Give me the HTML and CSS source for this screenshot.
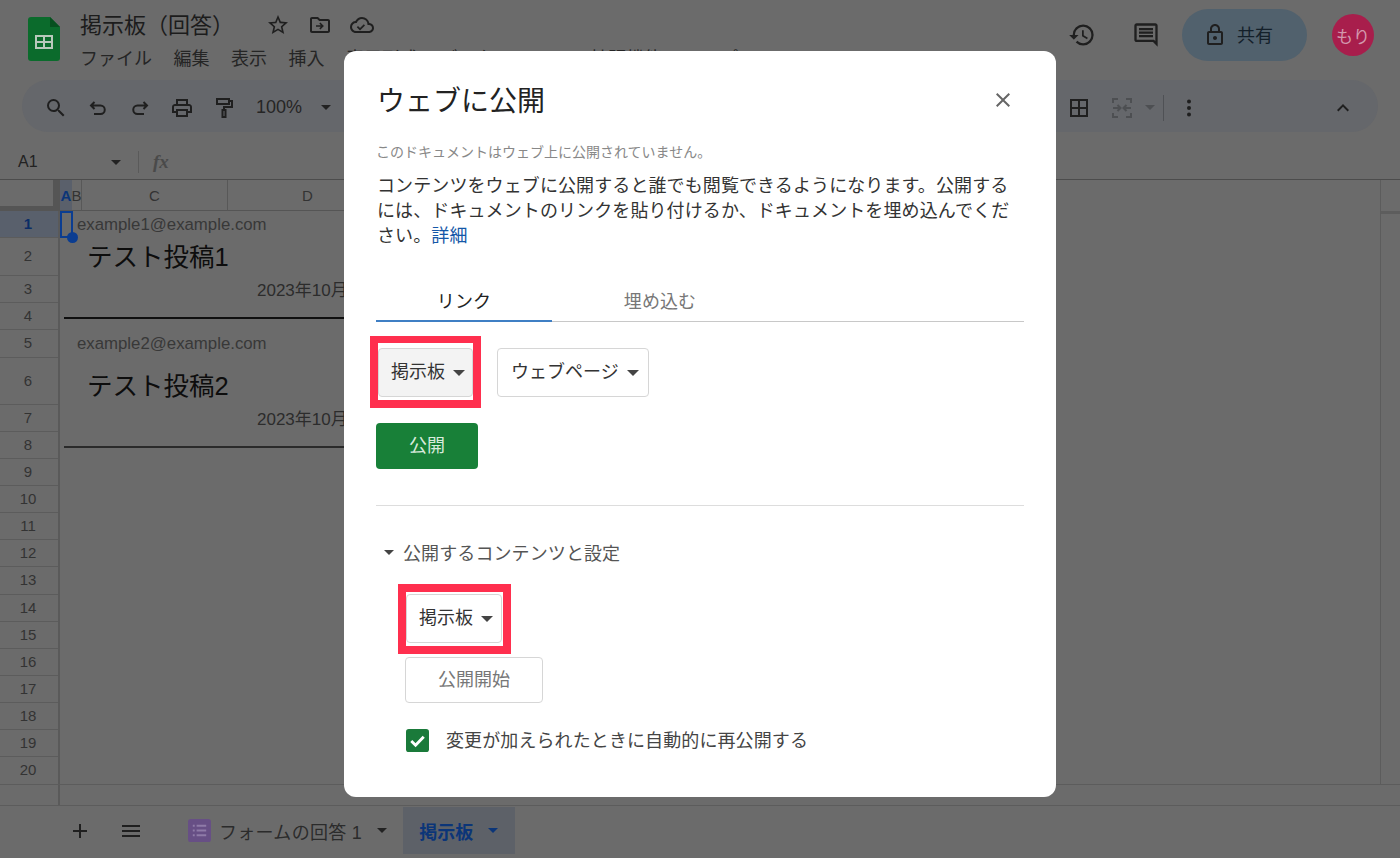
FILE: index.html
```html
<!DOCTYPE html>
<html lang="ja">
<head>
<meta charset="utf-8">
<title>掲示板（回答）</title>
<link rel="stylesheet" href="styles.css">
</head>
<body>
<div class="app">
  <header class="topbar">
    <svg class="logo" viewBox="0 0 32 44"><path class="logo-body" d="M3 0h19l10 10v31a3 3 0 0 1-3 3H3a3 3 0 0 1-3-3V3a3 3 0 0 1 3-3z"/><path class="logo-fold" d="M22 0l10 10H22z"/><path class="logo-grid" d="M7 18h18v14H7zm2 2v4h6v-4zm8 0v4h6v-4zm-8 6v4h6v-4zm8 0v4h6v-4z" fill-rule="evenodd"/></svg>
    <div class="titleblock">
      <div class="titlerow">
        <span class="doctitle">掲示板（回答）</span>
        <svg class="ico star" viewBox="0 0 24 24"><path d="M22 9.24l-7.19-.62L12 2 9.19 8.63 2 9.24l5.46 4.73L5.82 21 12 17.27 18.18 21l-1.63-7.03L22 9.24zM12 15.4l-3.76 2.27 1-4.28-3.32-2.88 4.38-.38L12 6.1l1.71 4.04 4.38.38-3.32 2.88 1 4.28L12 15.4z"/></svg>
        <svg class="ico" viewBox="0 0 24 24"><path d="M20 6h-8l-2-2H4c-1.1 0-2 .9-2 2v12c0 1.1.9 2 2 2h16c1.1 0 2-.9 2-2V8c0-1.1-.9-2-2-2zm0 12H4V6h5.17l2 2H20v10zM12.4 16.5l3.5-3.5-3.5-3.5-1.1 1.1 1.6 1.6H8v1.6h4.9l-1.6 1.6z"/></svg>
        <svg class="ico" viewBox="0 0 24 24"><path d="M19.35 10.04A7.49 7.49 0 0 0 12 4C9.11 4 6.6 5.64 5.35 8.04A5.994 5.994 0 0 0 0 14c0 3.31 2.69 6 6 6h13c2.76 0 5-2.24 5-5 0-2.64-2.05-4.78-4.65-4.96zM19 18H6c-2.21 0-4-1.79-4-4s1.79-4 4-4h.71C7.37 7.69 9.48 6 12 6a5.5 5.5 0 0 1 5.5 5.5v.5H19c1.66 0 3 1.34 3 3s-1.34 3-3 3zM10 15l-2-2-1.2 1.2L10 17.4l5-5-1.2-1.2z"/></svg>
      </div>
      <nav class="menubar">
        <span>ファイル</span><span>編集</span><span>表示</span><span>挿入</span><span>表示形式</span><span>データ</span><span>ツール</span><span>拡張機能</span><span>ヘルプ</span>
      </nav>
    </div>
    <div class="topright">
      <svg class="ico big" viewBox="0 0 24 24"><path d="M13 3a9 9 0 0 0-9 9H1l3.89 3.89.07.14L9 12H6c0-3.87 3.13-7 7-7s7 3.13 7 7-3.13 7-7 7c-1.93 0-3.68-.79-4.94-2.06l-1.42 1.42A8.954 8.954 0 0 0 13 21a9 9 0 0 0 0-18zm-1 5v5l4.28 2.54.72-1.21-3.5-2.08V8H12z"/></svg>
      <svg class="ico big comment" viewBox="0 0 24 24"><path d="M21.99 4c0-1.1-.89-2-1.99-2H4c-1.1 0-2 .9-2 2v12c0 1.1.9 2 2 2h14l4 4-.01-18zM20 4v13.17L18.83 16H4V4h16zM6 12h12v2H6zm0-3h12v2H6zm0-3h12v2H6z"/></svg>
      <div class="share">
        <svg class="ico" viewBox="0 0 24 24"><path d="M18 8h-1V6c0-2.76-2.24-5-5-5S7 3.24 7 6v2H6c-1.1 0-2 .9-2 2v10c0 1.1.9 2 2 2h12c1.1 0 2-.9 2-2V10c0-1.1-.9-2-2-2zM9 6c0-1.66 1.34-3 3-3s3 1.34 3 3v2H9V6zm9 14H6V10h12v10zm-6-3c1.1 0 2-.9 2-2s-.9-2-2-2-2 .9-2 2 .9 2 2 2z"/></svg>
        <span class="sharelabel">共有</span>
      </div>
      <div class="avatar">もり</div>
    </div>
  </header>

  <div class="toolbar">
    <div class="tbgroup">
      <span class="tbbtn"><svg class="ico" viewBox="0 0 24 24"><path d="M15.5 14h-.79l-.28-.27A6.471 6.471 0 0 0 16 9.5 6.5 6.5 0 1 0 9.5 16c1.61 0 3.09-.59 4.23-1.57l.27.28v.79l5 4.99L20.49 19l-4.99-5zm-6 0C7.01 14 5 11.99 5 9.5S7.01 5 9.5 5 14 7.01 14 9.5 11.99 14 9.5 14z"/></svg></span>
      <span class="tbbtn"><svg class="ico line" viewBox="0 0 24 24"><path d="M8.5 6L5 9.5 8.5 13M5 9.5h9.5a4.25 4.25 0 0 1 0 8.500H8"/></svg></span>
      <span class="tbbtn"><svg class="ico line" viewBox="0 0 24 24"><path d="M15.500 6L19 9.5 15.500 13M19 9.5H9.500a4.250 4.250 0 0 0 0 8.500H16"/></svg></span>
      <span class="tbbtn"><svg class="ico" viewBox="0 0 24 24"><path d="M19 8h-1V3H6v5H5c-1.66 0-3 1.34-3 3v6h4v4h12v-4h4v-6c0-1.66-1.34-3-3-3zM8 5h8v3H8V5zm8 14H8v-4h8v4zm4-4h-2v-2H6v2H4v-4c0-.55.45-1 1-1h14c.55 0 1 .45 1 1v4z"/></svg></span>
      <span class="tbbtn"><svg class="ico line" viewBox="0 0 24 24"><path d="M5 3h12v5H5zM17 5h3v6h-8v3M10.5 14h3v7h-3z"/></svg></span>
      <span class="zoomval">100%</span>
      <span class="caret zoomcaret"></span>
    </div>
    <div class="tbgroup">
      <svg class="ico" viewBox="0 0 24 24"><path d="M3 3v18h18V3H3zm8 16H5v-6h6v6zm0-8H5V5h6v6zm8 8h-6v-6h6v6zm0-8h-6V5h6v6z"/></svg>
      <svg class="ico line faded mergeico" viewBox="0 0 24 24"><path d="M8 3H3v4M3 17v4h5M16 3h5v4M21 17v4h-5M3 12h7M7.5 9l3 3-3 3M21 12h-7M16.5 9l-3 3 3 3"/></svg>
      <span class="caret faded-caret"></span>
      <span class="vsep"></span>
      <svg class="ico dots" viewBox="0 0 24 24"><circle cx="12" cy="5.5" r="2"/><circle cx="12" cy="12" r="2"/><circle cx="12" cy="18.5" r="2"/></svg>
      <svg class="ico chevron" viewBox="0 0 24 24"><path d="M7.41 15.41L12 10.83l4.59 4.58L18 14l-6-6-6 6z"/></svg>
    </div>
  </div>

  <div class="formulabar">
    <span class="cellname">A1</span>
    <span class="caret"></span>
    <span class="fsep"></span>
    <span class="fx">fx</span>
  </div>

  <div class="colheads">
    <div class="corner"></div>
    <div class="col col-a">A</div>
    <div class="col col-b">B</div>
    <div class="col col-c">C</div>
    <div class="col col-d">D</div>
    <div class="colspace"></div>
    <div class="scrolltop"></div>
  </div>

  <div class="sheet">
    <div class="rowheads">
      <div class="rh rh-sel h27">1</div>
      <div class="rh h38">2</div>
      <div class="rh h27">3</div>
      <div class="rh h27">4</div>
      <div class="rh h28">5</div>
      <div class="rh h47">6</div>
      <div class="rh h27">7</div>
      <div class="rh h27">8</div>
      <div class="rh h27">9</div>
      <div class="rh h27">10</div>
      <div class="rh h27">11</div>
      <div class="rh h27">12</div>
      <div class="rh h28">13</div>
      <div class="rh h27">14</div>
      <div class="rh h27">15</div>
      <div class="rh h27">16</div>
      <div class="rh h27">17</div>
      <div class="rh h27">18</div>
      <div class="rh h27">19</div>
      <div class="rh h27 last">20</div>
    </div>
    <div class="cells">
      <div class="row h27 email"><span class="selbox"><i class="seldot"></i></span>example1@example.com</div>
      <div class="row h38 posttitle">テスト投稿1</div>
      <div class="row h27 date">2023年10月</div>
      <div class="row h27"><div class="rule"></div></div>
      <div class="row h28 email">example2@example.com</div>
      <div class="row h47 posttitle lower">テスト投稿2</div>
      <div class="row h27 date">2023年10月</div>
      <div class="row h27"><div class="rule soft"></div></div>
    </div>
    <div class="vscroll"></div>
  </div>

  <div class="hscroll"><div class="hscroll-left"></div></div>

  <footer class="tabs">
    <svg class="ico plus" viewBox="0 0 24 24"><path d="M19 13h-6v6h-2v-6H5v-2h6V5h2v6h6v2z"/></svg>
    <svg class="ico menu" viewBox="0 0 24 24"><path d="M3 18h18v-2H3v2zm0-5h18v-2H3v2zm0-7v2h18V6H3z"/></svg>
    <div class="tab">
      <svg class="formico" viewBox="0 0 24 24"><rect width="24" height="24" rx="3"/><path d="M5 6h2v2H5zM9 6h10v2H9zM5 11h2v2H5zM9 11h10v2H9zM5 16h2v2H5zM9 16h10v2H9z"/></svg>
      <span class="tablabel">フォームの回答 1</span>
      <span class="caret"></span>
    </div>
    <div class="tab active">
      <span class="tablabel">掲示板</span>
      <span class="caret"></span>
    </div>
  </footer>
</div>

<section class="dialog">
  <div class="dlghead">
    <h1>ウェブに公開</h1>
    <svg class="closeico" viewBox="0 0 24 24"><path d="M19 6.41L17.59 5 12 10.59 6.41 5 5 6.41 10.59 12 5 17.59 6.41 19 12 13.41 17.59 19 19 17.59 13.41 12z"/></svg>
  </div>
  <p class="status">このドキュメントはウェブ上に公開されていません。</p>
  <p class="desc">コンテンツをウェブに公開すると誰でも閲覧できるようになります。公開するには、ドキュメントのリンクを貼り付けるか、ドキュメントを埋め込んでください。<a href="#">詳細</a></p>
  <div class="dlgtabs">
    <div class="dlgtab on">リンク</div>
    <div class="dlgtab">埋め込む</div>
  </div>
  <div class="selects">
    <div class="select hovered">掲示板<span class="caret"></span><span class="mark mark-a"></span></div>
    <div class="select wide">ウェブページ<span class="caret"></span></div>
  </div>
  <button class="publish">公開</button>
  <hr class="divider">
  <div class="settings-head"><span class="caret"></span>公開するコンテンツと設定</div>
  <div class="settings">
    <div class="select small">掲示板<span class="caret"></span><span class="mark mark-b"></span></div>
    <button class="start">公開開始</button>
    <label class="check">
      <svg class="checkbox" viewBox="0 0 24 24"><rect width="24" height="24" rx="3"/><path d="M5.5 12.5l4.5 4.5 8.5-9" /></svg>
      <span class="checklabel">変更が加えられたときに自動的に再公開する</span>
    </label>
  </div>
</section>
</body>
</html>
```
FILE: styles.css
```css
* { box-sizing: border-box; }
html, body { margin: 0; padding: 0; height: 100%; }
body {
  position: relative;
  width: 1400px;
  height: 858px;
  overflow: hidden;
  background: #6b6b6b;
  color: #1f1f1f;
  font-family: "Liberation Sans", "Noto Sans CJK JP", sans-serif;
}
.app { display: flex; flex-direction: column; height: 858px; }

.ico { width: 24px; height: 24px; fill: #1f1f1f; flex: none; display: block; }
.ico.big { width: 28px; height: 28px; }
.ico.line { fill: none; stroke: #1f1f1f; stroke-width: 2; }
.caret {
  display: inline-block;
  width: 0;
  height: 0;
  border-left: 5px solid transparent;
  border-right: 5px solid transparent;
  border-top: 5px solid #222;
  flex: none;
}

/* top bar */
.topbar { height: 80px; display: flex; align-items: flex-start; flex: none; padding-left: 28px; }
.logo { width: 32px; height: 44px; margin-top: 17px; flex: none; }
.logo-body { fill: #0b6b2c; }
.logo-fold { fill: #07501f; }
.logo-grid { fill: #b9c9bc; }
.titleblock { margin-left: 20px; padding-top: 10px; }
.titlerow { display: flex; align-items: center; height: 30px; }
.doctitle { font-size: 22px; width: 154px; color: #1c1c1c; white-space: nowrap; margin-bottom: 5px; }
.titlerow .ico { margin-right: 18px; }
.titlerow .star { margin-left: 32px; }
.menubar { display: flex; gap: 21.5px; font-size: 18px; line-height: 24px; margin-top: 7px; color: #252525; white-space: nowrap; }
.topright { margin-left: auto; display: flex; align-items: center; height: 70px; padding-right: 26px; }
.comment { margin-left: 36px; }
.share {
  margin-left: 22px;
  width: 125px;
  height: 52px;
  border-radius: 26px;
  background: #51616d;
  display: flex;
  align-items: center;
  gap: 10px;
  padding-left: 21px;
  font-size: 18px;
  color: #14202a;
}
.sharelabel { margin-bottom: 2px; }
.avatar {
  margin-left: 25px;
  width: 42px;
  height: 42px;
  border-radius: 50%;
  background: #a81e4c;
  color: #d398ac;
  font-size: 17px;
  display: flex;
  align-items: center;
  justify-content: center;
}

/* toolbar */
.toolbar {
  margin: 0 22px;
  height: 52px;
  border-radius: 26px;
  background: #65676b;
  display: flex;
  align-items: center;
  justify-content: space-between;
  padding: 3px 23px 0 13px;
  flex: none;
}
.tbgroup { display: flex; align-items: center; }
.tbbtn { width: 42px; display: flex; justify-content: center; }
.zoomval { font-size: 18px; margin-left: 11px; color: #252525; }
.zoomcaret { margin-left: 19px; }
.mergeico { margin-left: 19px; stroke: #4d4f52 !important; }
.faded-caret { margin-left: 11px; border-top-color: #4d4f52; }
.vsep { width: 1px; height: 26px; background: #4f5155; margin-left: 8px; }
.dots { margin-left: 13px; }
.chevron { margin-left: 130px; }

/* formula bar */
.formulabar { height: 48px; padding: 13px 0 0 18px; display: flex; align-items: center; flex: none; border-bottom: 1px solid #4c4c4c; }
.cellname { font-size: 16px; width: 93px; color: #222; }
.fsep { width: 1px; height: 22px; background: #5a5a5a; margin-left: 17px; }
.fx { margin-left: 14px; font-family: "Liberation Serif", serif; font-style: italic; font-weight: bold; font-size: 19px; color: #4a4a4a; }

/* column headings */
.colheads { height: 31px; display: flex; flex: none; font-size: 15px; color: #333; }
.corner { width: 60px; border-right: 7px solid #555; border-bottom: 5px solid #555; }
.col { display: flex; align-items: center; justify-content: center; border-bottom: 1px solid #555; border-right: 1px solid #585858; }
.col-a { width: 12px; background: #5a606b; color: #0b3578; font-weight: bold; border-right: 0; }
.col-b { width: 10px; }
.col-c { width: 146px; }
.col-d { width: 160px; }
.colspace { flex: 1; }
.scrolltop { width: 20px; border-left: 1px solid #5c5c5c; }

/* sheet */
.sheet { height: 573px; display: flex; flex: none; }
.rowheads { width: 60px; flex: none; border-right: 2px solid #5a5a5a; font-size: 15px; color: #333; }
.rh { display: flex; align-items: center; justify-content: center; border-bottom: 1px solid #5c5c5c; padding: 0 2px 2px 0; }
.rh.last { border-bottom: 0; }
.rh-sel { background: #59606c; color: #0b2d66; font-weight: bold; }
.h27 { height: 27px; }
.h28 { height: 28px; }
.h38 { height: 38px; }
.h47 { height: 47px; }
.cells { flex: 1; }
.row { display: flex; align-items: center; white-space: nowrap; position: relative; }
.email { padding-left: 17px; font-size: 16.8px; color: #383838; }
.posttitle { padding: 0 0 5px 27px; font-size: 25.5px; color: #0d0d0d; }
.posttitle.lower { padding: 3px 0 0 27px; }
.date { padding: 0 0 2px 197px; font-size: 17px; color: #2c2c2c; }
.rule { height: 2px; width: 400px; margin: 3px 0 0 4px; background: #0f0f0f; }
.rule.soft { background: #2a2a2a; }
.selbox { position: absolute; left: 0; top: 0; width: 13px; height: 27px; border: 2px solid #0b3d91; border-left-width: 2px; }
.seldot { position: absolute; right: -7px; bottom: -7px; width: 11px; height: 11px; border-radius: 50%; background: #0b3d91; }
.vscroll { width: 20px; flex: none; border-left: 1px solid #5c5c5c; border-top: 3px solid #5d5d5d; }

.hscroll { height: 22px; flex: none; border-top: 1px solid #5c5c5c; border-bottom: 1px solid #5c5c5c; }
.hscroll-left { width: 60px; height: 100%; border-right: 2px solid #5a5a5a; }

/* tabs */
.tabs { flex: 1; display: flex; align-items: flex-start; padding-left: 68px; }
.plus { margin-top: 13px; }
.menu { margin: 13px 0 0 27px; }
.tab { display: flex; align-items: center; height: 47px; margin-top: 1px; }
.tab:not(.active) { margin-left: 45px; font-size: 18px; color: #2b2b2b; }
.tab:not(.active) .tablabel { letter-spacing: .3px; }
.formico { width: 23px; height: 23px; flex: none; }
.formico rect { fill: #674f85; }
.formico path { fill: #8f7ba8; }
.tab .tablabel { margin-left: 8px; white-space: nowrap; }
.tab .caret { margin-left: 15px; }
.tab.active {
  margin-left: 16px;
  width: 112px;
  padding-left: 16px;
  background: #5d6168;
  color: #0b3578;
  font-weight: bold;
  font-size: 18px;
}
.tab.active .tablabel { margin-left: 0; }
.tab.active .caret { margin-left: 15px; border-top-color: #0b3578; }

/* dialog */
.dialog {
  position: absolute;
  left: 344px;
  top: 51px;
  width: 712px;
  height: 746px;
  background: #fff;
  border-radius: 12px;
  padding: 0 32px;
  font-family: "Noto Sans CJK JP", "Liberation Sans", sans-serif;
  color: #333;
  letter-spacing: .1px;
}
.dlghead { display: flex; justify-content: space-between; align-items: center; height: 97px; padding-left: 1px; }
.dlghead h1 { margin: 0 0 2px; font-size: 28px; font-weight: 400; color: #222; letter-spacing: 0; }
.closeico { width: 24px; height: 24px; fill: #666; margin-right: 9px; }
.status { margin: -7px 0 0; font-size: 14px; line-height: 20px; color: #888; letter-spacing: 0; }
.desc { margin: 11px 8px 0 1px; font-size: 18px; line-height: 25px; color: #333; }
.desc a { color: #1558a8; text-decoration: none; }
.dlgtabs { display: flex; margin-top: 34px; height: 41px; border-bottom: 1px solid #c8c8c8; }
.dlgtab { width: 176px; margin-right: 20px; text-align: center; font-size: 18px; line-height: 38px; color: #777; height: 41px; }
.dlgtab.on { color: #222; border-bottom: 2px solid #3f7fc4; margin-right: 20px; }
.selects { display: flex; gap: 24px; margin: 26px 0 0 2px; }
.select {
  position: relative;
  display: inline-flex;
  align-items: center;
  height: 49px;
  padding: 0 7px 6px 12px;
  border: 1px solid #d6d6d6;
  border-radius: 4px;
  background: #fff;
  font-size: 18px;
  color: #333;
  white-space: nowrap;
  letter-spacing: 0;
}
.select .caret { margin: 6px 0 0 8px; border-top: 6px solid #444; border-left-width: 6px; border-right-width: 6px; }
.select.hovered { background: #f3f3f3; }
.select.wide { padding-left: 13px; padding-right: 9px; }
.mark { position: absolute; border: 8px solid #ff2f4e; pointer-events: none; }
.mark-a { left: -9px; right: -9px; top: -13px; bottom: -12px; border-top-width: 7px; }
.mark-b { left: -9px; right: -10px; top: -11px; bottom: -12px; }
.publish {
  display: block;
  margin-top: 26px;
  padding: 0 0 4px;
  width: 102px;
  height: 46px;
  border: 0;
  border-radius: 4px;
  background: #188038;
  color: #d8eadd;
  font: inherit;
  font-size: 18px;
}
.divider { margin: 36px 0 0; border: 0; border-top: 1px solid #ddd; }
.settings-head { display: flex; align-items: center; margin-top: 33px; font-size: 18px; line-height: 26px; color: #555; padding-left: 8px; }
.settings-head .caret { margin-right: 9px; border-top-color: #444; }
.settings { margin: 29px 0 0 30px; display: flex; flex-direction: column; align-items: flex-start; }
.select.small { padding-left: 12px; padding-right: 8px; }
.start {
  margin-top: 14px;
  padding: 0 0 5px;
  width: 138px;
  height: 46px;
  border: 1px solid #d6d6d6;
  border-radius: 4px;
  background: #fff;
  font: inherit;
  font-size: 18px;
  color: #777;
  margin-left: -1px;
}
.check { display: flex; align-items: center; margin-top: 23px; font-size: 18px; color: #444; }
.checklabel { margin-bottom: 2px; }
.checkbox { width: 23px; height: 23px; flex: none; margin-right: 17px; }
.checkbox rect { fill: #1a7a3a; }
.checkbox path { fill: none; stroke: #fff; stroke-width: 3; }
```
